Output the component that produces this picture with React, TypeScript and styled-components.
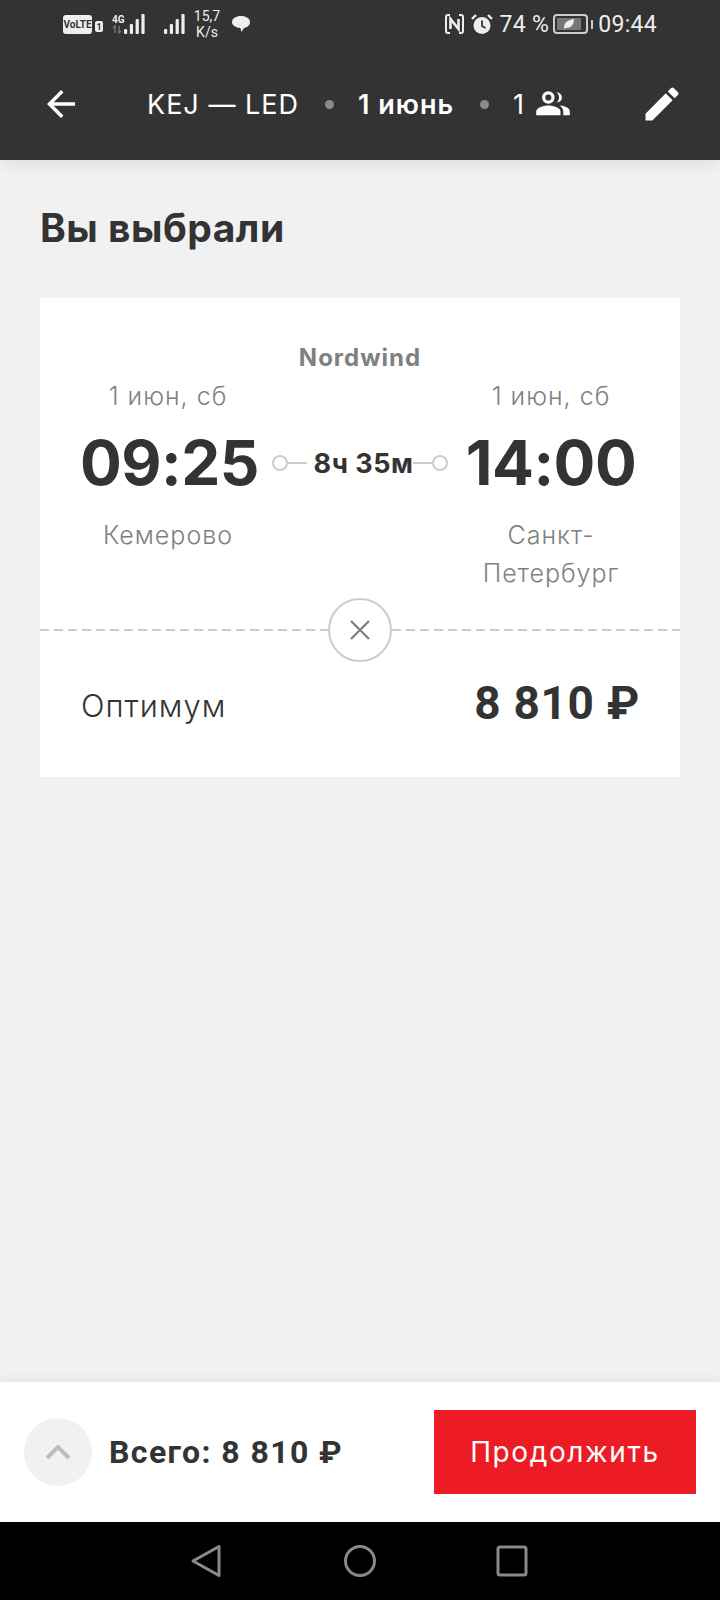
import React from 'react';
import styled, { createGlobalStyle } from 'styled-components';

const GlobalStyle = createGlobalStyle`
    html, body {
        margin: 0;
        padding: 0;
        background: #f1f1f1;
    }
    * {
        box-sizing: border-box;
    }
`;

const Page = styled.div`
    display: flex;
    flex-direction: column;
    width: 720px;
    height: 1600px;
    overflow: hidden;
    font-family: "Inter", sans-serif;
    background: #f1f1f1;
`;

const Header = styled.header`
    height: 160px;
    background: #333333;
    color: #ffffff;
    box-shadow: 0 4px 14px rgba(0, 0, 0, 0.08);
    position: relative;
    z-index: 1;
`;

const StatusBar = styled.div`
    display: flex;
    align-items: center;
    justify-content: space-between;
    height: 48px;
    padding: 0 63px;
    font-family: "Roboto", sans-serif;
`;

const StatusGroup = styled.div`
    display: flex;
    align-items: center;
`;

const VolteBadge = styled.span`
    display: flex;
    align-items: center;
    justify-content: center;
    width: 29px;
    height: 19px;
    border-radius: 3px;
    background: #eeeeee;
    color: #333333;
    font-size: 10px;
    font-weight: 700;
`;

const SimBadge = styled.span`
    display: flex;
    align-items: center;
    justify-content: center;
    width: 8px;
    height: 11px;
    margin: 5px 0 0 3px;
    border-radius: 2px;
    background: #eeeeee;
    color: #333333;
    font-size: 9px;
    font-weight: 700;
`;

const NetworkLabel = styled.span`
    display: flex;
    flex-direction: column;
    width: 11px;
    margin-left: 9px;
    font-size: 10px;
    font-weight: 700;
    line-height: 10px;
    color: #eeeeee;
`;

const Speed = styled.span`
    width: 32px;
    margin-left: 6px;
    font-size: 14px;
    line-height: 16px;
    text-align: center;
    color: #eeeeee;
`;

const StatusText = styled.span<{ $left: number }>`
    margin-left: ${(p) => p.$left}px;
    font-size: 23px;
    letter-spacing: 0.3px;
    color: #eeeeee;
`;

const NavRow = styled.div`
    display: flex;
    align-items: center;
    height: 112px;
    padding: 0 36px 0 40px;
`;

const RouteText = styled.span<{ $strong?: boolean }>`
    font-size: 27px;
    font-weight: ${(p) => (p.$strong ? 600 : 400)};
    letter-spacing: 1px;
    white-space: nowrap;
`;

const Dot = styled.span`
    width: 9px;
    height: 9px;
    margin: 0 24px 0 26px;
    border-radius: 50%;
    background: #8a8a8a;
`;

const Main = styled.main`
    flex: 1;
    padding: 0 40px;
`;

const Title = styled.h1`
    margin: 42px 0 44px;
    font-size: 39px;
    line-height: 52px;
    font-weight: 700;
    letter-spacing: 0.5px;
    color: #333333;
`;

const Card = styled.section`
    height: 479px;
    padding-top: 41px;
    background: #ffffff;
`;

const Airline = styled.div`
    font-size: 24px;
    line-height: 38px;
    font-weight: 700;
    letter-spacing: 1px;
    text-align: center;
    color: #808080;
`;

const Route = styled.div`
    display: grid;
    grid-template-columns: 176px 1fr 178px;
    height: 221px;
    padding: 0 40px;
    align-content: start;
`;

const DateText = styled.div`
    font-size: 25px;
    line-height: 38px;
    font-weight: 300;
    letter-spacing: 1px;
    text-align: center;
    color: #808080;
`;

const TimeText = styled.div`
    padding-top: 10px;
    font-size: 62px;
    line-height: 76px;
    font-weight: 700;
    letter-spacing: -0.5px;
    text-align: center;
    white-space: nowrap;
    color: #333333;
`;

const CityText = styled.div`
    padding-top: 15px;
    font-size: 25px;
    line-height: 38px;
    font-weight: 300;
    letter-spacing: 1px;
    text-align: center;
    color: #808080;
`;

const Connector = styled.div`
    display: flex;
    align-items: center;
    justify-content: center;
    padding: 10px 14px 0 16px;
`;

const ConnectorDot = styled.span`
    flex: none;
    width: 16px;
    height: 16px;
    border: 2px solid #cccccc;
    border-radius: 50%;
`;

const ConnectorLine = styled.span`
    flex: 1;
    height: 2px;
    background: #cccccc;
`;

const Duration = styled.span`
    margin-left: 7px;
    font-size: 27px;
    font-weight: 700;
    letter-spacing: 0.5px;
    white-space: nowrap;
    color: #333333;
`;

const Divider = styled.div`
    display: flex;
    align-items: center;
    height: 64px;
`;

const Dashes = styled.span`
    flex: 1;
    height: 2px;
    background: repeating-linear-gradient(to right, #cccccc 0 9px, transparent 9px 14px);
`;

const RemoveButton = styled.button`
    display: flex;
    align-items: center;
    justify-content: center;
    width: 64px;
    height: 64px;
    padding: 0;
    border: 2px solid #cccccc;
    border-radius: 50%;
    background: #ffffff;
`;

const TariffRow = styled.div`
    display: flex;
    align-items: center;
    justify-content: space-between;
    padding: 14px 40px 0 41px;
`;

const TariffName = styled.span`
    padding-top: 4px;
    font-size: 31px;
    font-weight: 300;
    letter-spacing: 1px;
    color: #333333;
`;

const Price = styled.span`
    font-family: "Roboto", sans-serif;
    font-size: 46px;
    font-weight: 700;
    letter-spacing: 0.7px;
    color: #333333;
`;

const BottomBar = styled.footer`
    display: flex;
    align-items: center;
    height: 140px;
    padding: 0 24px;
    background: #ffffff;
    box-shadow: 0 -3px 10px rgba(0, 0, 0, 0.06);
`;

const ExpandButton = styled.button`
    display: flex;
    align-items: center;
    justify-content: center;
    flex: none;
    width: 68px;
    height: 68px;
    padding: 0;
    border: none;
    border-radius: 50%;
    background: #f1f1f1;
`;

const Total = styled.span`
    flex: 1;
    margin-left: 17px;
    font-family: "Roboto", sans-serif;
    font-size: 32px;
    font-weight: 700;
    letter-spacing: 1.4px;
    color: #333333;
`;

const ContinueButton = styled.button`
    width: 262px;
    height: 84px;
    border: none;
    background: #ed1c24;
    color: #ffffff;
    font-family: "Inter", sans-serif;
    font-size: 28px;
    font-weight: 400;
    letter-spacing: 1.6px;
`;

const SystemNav = styled.nav`
    display: flex;
    align-items: center;
    justify-content: center;
    gap: 120px;
    height: 78px;
    background: #000000;
`;

const Signal = ({ left }: { left: number }) => (
    <svg width="22" height="20" viewBox="0 0 22 20" style={{ marginLeft: left }}>
        {[0, 1, 2, 3].map((i) => (
            <rect key={i} x={i * 5.8 + 1} y={15 - i * 5} width="3.2" height={5 + i * 5} rx="1" fill="#eeeeee" />
        ))}
    </svg>
);

const App: React.FC = () => {
    return (
        <Page>
            <GlobalStyle />
            <Header>
                <StatusBar>
                    <StatusGroup>
                        <VolteBadge>VoLTE</VolteBadge>
                        <SimBadge>1</SimBadge>
                        <NetworkLabel>
                            4G
                            <svg width="11" height="9" viewBox="0 0 11 9">
                                <path d="M3 8V1L1 3M7 1v7l2-2" fill="none" stroke="#777777" strokeWidth="1.500" />
                            </svg>
                        </NetworkLabel>
                        <Signal left={0} />
                        <Signal left={18} />
                        <Speed>15,7 K/s</Speed>
                        <svg width="20" height="18" viewBox="0 0 20 18" style={{ marginLeft: 8 }}>
                            <path d="M10 1c5 0 9 2.400 9 6s-3 5.500-6 6l-2.600 4-1-4C5 12.600 1 10.600 1 7s4-6 9-6z" fill="#eeeeee" />
                        </svg>
                    </StatusGroup>
                    <StatusGroup>
                        <svg width="19" height="20" viewBox="0 0 19 20">
                            <path d="M5 1H3a2 2 0 0 0-2 2v14a2 2 0 0 0 2 2h2M14 1h2a2 2 0 0 1 2 2v14a2 2 0 0 1-2 2h-2" fill="none" stroke="#eeeeee" strokeWidth="2" />
                            <path d="M5.500 15V5l8 10V5" fill="none" stroke="#eeeeee" strokeWidth="2.600" />
                        </svg>
                        <svg width="22" height="22" viewBox="0 0 22 22" style={{ marginLeft: 7 }}>
                            <circle cx="11" cy="12.500" r="8.500" fill="#eeeeee" />
                            <path d="M11 7.500v5.500l3.500 2" fill="none" stroke="#333333" strokeWidth="1.800" />
                            <path d="M1 6l4-4M21 6l-4-4" stroke="#eeeeee" strokeWidth="2.400" />
                        </svg>
                        <StatusText $left={7}>74 %</StatusText>
                        <svg width="42" height="22" viewBox="0 0 42 22" style={{ marginLeft: 4 }}>
                            <rect x="1" y="2" width="33" height="18" rx="3" fill="none" stroke="#cccccc" strokeWidth="2" />
                            <rect x="4" y="5" width="24" height="12" fill="#777777" />
                            <path d="M11 15c0-6 4-8 10-9 0 6-3 9-8 9l-2 1z" fill="#eeeeee" />
                            <rect x="38" y="7" width="2" height="9" fill="#cccccc" />
                        </svg>
                        <StatusText $left={3}>09:44</StatusText>
                    </StatusGroup>
                </StatusBar>
                <NavRow>
                    <svg width="42" height="42" viewBox="0 0 24 24" fill="#ffffff">
                        <path d="M20 11H7.830l5.590-5.590L12 4l-8 8 8 8 1.410-1.410L7.830 13H20v-2z" />
                    </svg>
                    <RouteText style={{ marginLeft: 65 }}>KEJ — LED</RouteText>
                    <Dot />
                    <RouteText $strong>1 июнь</RouteText>
                    <Dot />
                    <RouteText>1</RouteText>
                    <svg width="36" height="28" viewBox="0 0 38 30" style={{ marginLeft: 10 }}>
                        <circle cx="14" cy="8" r="5" fill="none" stroke="#ffffff" strokeWidth="3.400" />
                        <path d="M1 27v-4c0-4 7-6.500 13-6.500s13 2.500 13 6.500v4z" fill="#ffffff" />
                        <path d="M23 2.500c3.500.5 5.500 2.500 5.500 5.500s-2 5-5.500 5.500c1.500-1.500 2.500-3.500 2.500-5.500s-1-4-2.500-5.500z" fill="#ffffff" />
                        <path d="M26 16.500c6 .5 11 2.500 11 6.500v4h-7v-4c0-2.500-1.500-5-4-6.500z" fill="#ffffff" />
                    </svg>
                    <svg width="44" height="44" viewBox="0 0 24 24" fill="#ffffff" style={{ marginLeft: 'auto' }}>
                        <path d="M3 17.250V21h3.750L17.810 9.940l-3.750-3.750L3 17.250zM20.710 7.040c.390-.390.390-1.020 0-1.410l-2.340-2.340c-.390-.390-1.020-.390-1.410 0l-1.830 1.830 3.750 3.750 1.830-1.830z" />
                    </svg>
                </NavRow>
            </Header>
            <Main>
                <Title>Вы выбрали</Title>
                <Card>
                    <Airline>Nordwind</Airline>
                    <Route>
                        <DateText>1 июн, сб</DateText>
                        <span />
                        <DateText>1 июн, сб</DateText>
                        <TimeText>09:25</TimeText>
                        <Connector>
                            <ConnectorDot />
                            <ConnectorLine />
                            <Duration>8ч 35м</Duration>
                            <ConnectorLine />
                            <ConnectorDot />
                        </Connector>
                        <TimeText>14:00</TimeText>
                        <CityText>Кемерово</CityText>
                        <span />
                        <CityText>Санкт-<br />Петербург</CityText>
                    </Route>
                    <Divider>
                        <Dashes />
                        <RemoveButton aria-label="Удалить">
                            <svg width="22" height="22" viewBox="0 0 22 22">
                                <path d="M2 2l18 18M20 2L2 20" stroke="#808080" strokeWidth="2.400" />
                            </svg>
                        </RemoveButton>
                        <Dashes />
                    </Divider>
                    <TariffRow>
                        <TariffName>Оптимум</TariffName>
                        <Price>8 810 ₽</Price>
                    </TariffRow>
                </Card>
            </Main>
            <BottomBar>
                <ExpandButton aria-label="Развернуть">
                    <svg width="26" height="16" viewBox="0 0 26 16">
                        <path d="M2 14L13 3l11 11" fill="none" stroke="#bdbdbd" strokeWidth="4" />
                    </svg>
                </ExpandButton>
                <Total>Всего: 8 810 ₽</Total>
                <ContinueButton>Продолжить</ContinueButton>
            </BottomBar>
            <SystemNav>
                <svg width="32" height="34" viewBox="2 0 32 34" overflow="visible">
                    <path d="M29 2.500v29L3 17z" fill="none" stroke="#8a8a8a" strokeWidth="3" strokeLinejoin="round" />
                </svg>
                <svg width="32" height="34" viewBox="0 0 32 34">
                    <circle cx="16" cy="17" r="14.500" fill="none" stroke="#8a8a8a" strokeWidth="3" />
                </svg>
                <svg width="32" height="34" viewBox="0 0 32 34">
                    <rect x="2" y="3" width="28" height="28" rx="2" fill="none" stroke="#8a8a8a" strokeWidth="3" />
                </svg>
            </SystemNav>
        </Page>
    );
};

export default App;
